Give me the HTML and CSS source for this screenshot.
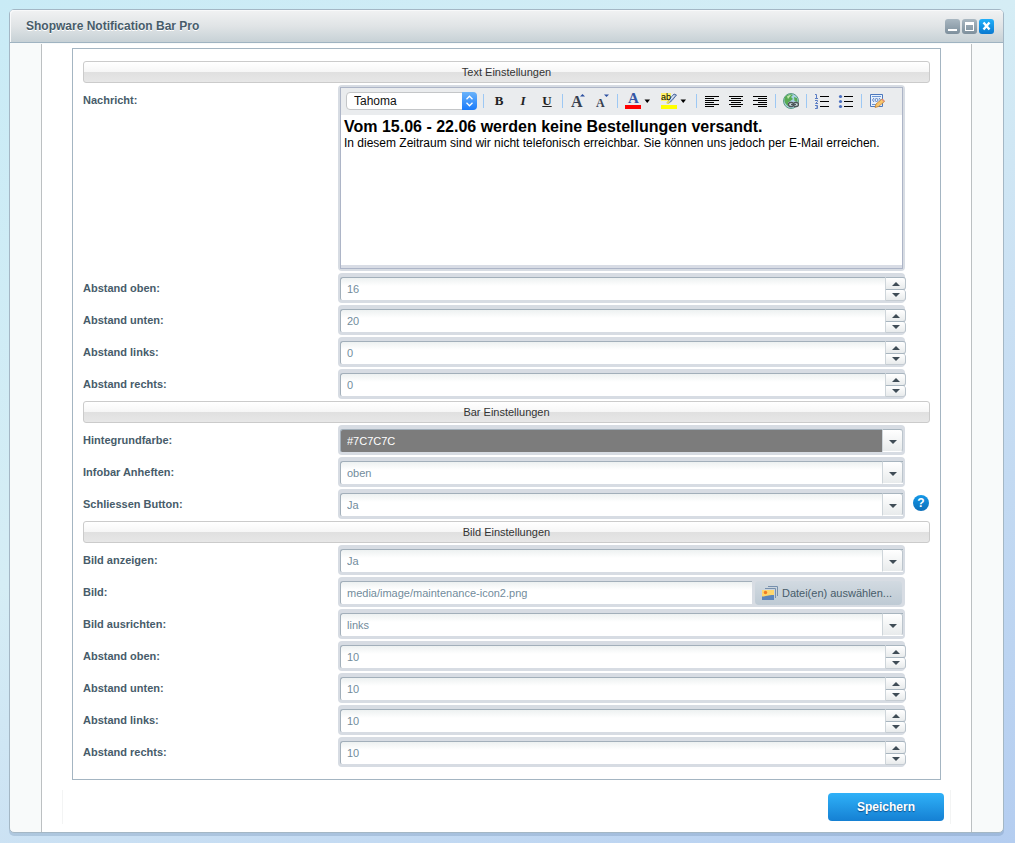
FILE: index.html
```html
<!DOCTYPE html>
<html lang="de">
<head>
<meta charset="utf-8">
<title>Shopware Notification Bar Pro</title>
<link rel="stylesheet" href="styles.css">
</head>
<body>
<main class="window">
  <header class="window-header">
    <h1 class="window-title">Shopware Notification Bar Pro</h1>
    <div class="window-tools">
      <button class="tool" type="button" aria-label="Minimieren"><svg width="15" height="15" viewBox="0 0 15 15"><path d="M3 10h9v2H3z" fill="#fff"/></svg></button>
      <button class="tool" type="button" aria-label="Maximieren"><svg width="15" height="15" viewBox="0 0 15 15"><path d="M3 3h9v9H3zM4 6v5h7V6z" fill="#fff" fill-rule="evenodd"/></svg></button>
      <button class="tool tool-close" type="button" aria-label="Schließen"><svg width="15" height="15" viewBox="0 0 15 15"><path d="M4.500 3.500l6 7M10.500 3.500l-6 7" stroke="#fff" stroke-width="2.400"/></svg></button>
    </div>
  </header>
  <form class="panel">
    <div class="fields">
      <h2 class="section">Text Einstellungen</h2>
      <div class="row">
        <span class="label" id="msg-label">Nachricht:</span>
        <div class="control editor">
          <div class="editor-frame">
            <div class="toolbar">
              <div class="font-select">
                <select aria-label="Schriftart"><option>Tahoma</option></select>
                <span class="font-arrows"><svg width="15" height="18" viewBox="0 0 15 18"><path d="M4.500 7.200l3-3 3 3M4.500 10.800l3 3 3-3" fill="none" stroke="#fff" stroke-width="1.300"/></svg></span>
              </div>
              <span class="sep"></span>
              <button class="tb bold" type="button">B</button>
              <button class="tb italic" type="button">I</button>
              <button class="tb underline" type="button">U</button>
              <span class="sep"></span>
              <button class="tb" type="button" aria-label="Text vergrößern"><svg width="16" height="16" viewBox="0 0 16 16"><text class="glyph" x="1" y="14" font-size="16" fill="#38404e">A</text><path d="M10 3.500h5L12.500 1z" fill="#2b4fa0"/></svg></button>
              <button class="tb" type="button" aria-label="Text verkleinern"><svg width="16" height="16" viewBox="0 0 16 16"><text class="glyph" x="2" y="14" font-size="12" fill="#38404e">A</text><path d="M10 1.500h5L12.500 4z" fill="#2b4fa0"/></svg></button>
              <span class="sep"></span>
              <button class="tb tb-wide" type="button" aria-label="Textfarbe"><svg width="28" height="18" viewBox="0 -2 28 18"><text class="glyph" x="3" y="10" font-size="15" fill="#3557a5">A</text><path d="M0 12h16v4H0z" fill="#f00"/><path d="M19.500 6.500h5.500l-2.750 3.500z" fill="#000"/></svg></button>
              <button class="tb tb-wide" type="button" aria-label="Hintergrundfarbe"><svg width="28" height="18" viewBox="0 -2 28 18"><path d="M0 0h10v8H0z" fill="#fff36b"/><path d="M6.500 10l1.500-3L13 1l2.500 1L11 7.500 8 10z" fill="#a9bede" stroke="#4f6aa0"/><path d="M8.500 7.500L13 2.500" stroke="#fff"/><path d="M5 10l3-3 1 2-2 2z" fill="#e9dc50"/><text class="ab" x="0" y="7" font-size="9">ab</text><path d="M0 12h16v4H0z" fill="#ff0"/><path d="M19.500 6.500h5.500l-2.750 3.500z" fill="#000"/></svg></button>
              <span class="sep"></span>
              <button class="tb" type="button" aria-label="Linksbündig"><svg width="16" height="16" viewBox="0 0 16 16"><path d="M1 3.500h14M1 5.500h9M1 7.500h14M1 9.500h9M1 11.500h14M1 13.500h9" stroke="#000"/></svg></button>
              <button class="tb" type="button" aria-label="Zentriert"><svg width="16" height="16" viewBox="0 0 16 16"><path d="M1 3.500h14M3 5.500h10M1 7.500h14M3 9.500h10M1 11.500h14M3 13.500h10" stroke="#000"/></svg></button>
              <button class="tb" type="button" aria-label="Rechtsbündig"><svg width="16" height="16" viewBox="0 0 16 16"><path d="M1 3.500h14M6 5.500h9M1 7.500h14M6 9.500h9M1 11.500h14M6 13.500h9" stroke="#000"/></svg></button>
              <span class="sep"></span>
              <button class="tb" type="button" aria-label="Link"><svg width="16" height="16" viewBox="0 0 16 16"><circle cx="8" cy="8" r="7.500" fill="#a9d0e4" stroke="#5b9b84"/><path d="M2 4c2-3 6-3.500 8-2L8 4l2 2-4 3-1 4C2 11 .5 8 2 4zM11 4l3 1 .5 4-3-1z" fill="#58ab53"/><path d="M4 3.500c1-1 2.500-1.500 4-1.500L5 6z" fill="#c1e6af"/><path d="M5 9h10v5H5z" fill="#dce3df" opacity=".7"/><rect x="5.500" y="9.500" width="5" height="4" rx="2" fill="none" stroke="#4c5659" stroke-width="1.300"/><rect x="10.500" y="9.500" width="5" height="4" rx="2" fill="none" stroke="#4c5659" stroke-width="1.300"/><path d="M8 11.500h5" stroke="#4c5659"/></svg></button>
              <span class="sep"></span>
              <button class="tb" type="button" aria-label="Nummerierte Liste"><svg width="16" height="16" viewBox="0 0 16 16"><path d="M6 3.500h9M6 8.500h9M6 13.500h9" stroke="#000"/><path d="M1 1.500h1.500V5M1 5.500h3M1 7.500h2.500v1L1.500 10.500H4M1 12.500h2.500v3H1M2 14h1" fill="none" stroke="#5b7cc4"/></svg></button>
              <button class="tb" type="button" aria-label="Aufzählung"><svg width="16" height="16" viewBox="0 0 16 16"><path d="M6 3.500h9M6 8.500h9M6 13.500h9" stroke="#000"/><circle cx="2.500" cy="3.500" r="1.600" fill="#4a6fc0"/><circle cx="2.500" cy="8.500" r="1.600" fill="#4a6fc0"/><circle cx="2.500" cy="13.500" r="1.600" fill="#4a6fc0"/></svg></button>
              <span class="sep"></span>
              <button class="tb" type="button" aria-label="Quelltext"><svg width="16" height="16" viewBox="0 0 16 16"><path d="M1.500 1.500h12v12h-12z" fill="#e8f1fc" stroke="#4c78bd"/><path d="M3 3.500h9M3 11.500h5" stroke="#6a94d4"/><path d="M5 5L3.500 7 5 9M10 5l1.500 2L10 9" fill="none" stroke="#5d84c4"/><circle cx="7.500" cy="7" r="1.500" fill="none" stroke="#5d84c4"/><path d="M6 14.500l1-3.500 6-5 2.500 2.500-6 5z" fill="#f8c66c" stroke="#c48336" stroke-width=".8"/><path d="M12.500 6.500l1-1 2.300 2.300-1 1.200z" fill="#e18b74"/></svg></button>
            </div>
            <div class="message" contenteditable="true" role="textbox" aria-multiline="true" aria-labelledby="msg-label">
              <div class="message-title">Vom 15.06 - 22.06 werden keine Bestellungen versandt.</div>
              <div>In diesem Zeitraum sind wir nicht telefonisch erreichbar. Sie können uns jedoch per E-Mail erreichen.</div>
            </div>
          </div>
        </div>
      </div>
      <div class="row"><label class="label" for="t-top">Abstand oben:</label><div class="control spinner"><input id="t-top" type="number" value="16"><div class="steps"><button class="step up" type="button" aria-label="Mehr"></button><button class="step down" type="button" aria-label="Weniger"></button></div></div></div>
      <div class="row"><label class="label" for="t-bottom">Abstand unten:</label><div class="control spinner"><input id="t-bottom" type="number" value="20"><div class="steps"><button class="step up" type="button" aria-label="Mehr"></button><button class="step down" type="button" aria-label="Weniger"></button></div></div></div>
      <div class="row"><label class="label" for="t-left">Abstand links:</label><div class="control spinner"><input id="t-left" type="number" value="0"><div class="steps"><button class="step up" type="button" aria-label="Mehr"></button><button class="step down" type="button" aria-label="Weniger"></button></div></div></div>
      <div class="row"><label class="label" for="t-right">Abstand rechts:</label><div class="control spinner"><input id="t-right" type="number" value="0"><div class="steps"><button class="step up" type="button" aria-label="Mehr"></button><button class="step down" type="button" aria-label="Weniger"></button></div></div></div>

      <h2 class="section">Bar Einstellungen</h2>
      <div class="row"><label class="label" for="color">Hintegrundfarbe:</label><div class="control combo"><input class="color" id="color" type="text" value="#7C7C7C"><button class="trigger" type="button" aria-label="Farbe wählen"></button></div></div>
      <div class="row"><label class="label" for="dock">Infobar Anheften:</label><div class="control combo"><select id="dock"><option>oben</option></select><span class="trigger overlay"></span></div></div>
      <div class="row"><label class="label" for="close">Schliessen Button:</label><div class="control combo"><select id="close"><option>Ja</option></select><span class="trigger overlay"></span></div><button class="help" type="button">?</button></div>

      <h2 class="section">Bild Einstellungen</h2>
      <div class="row"><label class="label" for="show">Bild anzeigen:</label><div class="control combo"><select id="show"><option>Ja</option></select><span class="trigger overlay"></span></div></div>
      <div class="row"><label class="label" for="image">Bild:</label><div class="control media"><input id="image" type="text" value="media/image/maintenance-icon2.png"><button class="choose" type="button"><svg width="16" height="14" viewBox="0 0 16 14"><path d="M6 .5h9.500V10M3 2.500h10.500V12" fill="none" stroke="#7790ad"/><path d="M0 4h12v10H0z" fill="#ffd66b"/><path d="M0 10.500c3 .5 5-1.500 12-1.500v5H0z" fill="#5d85bb"/><circle cx="3.500" cy="6.500" r="1.700" fill="#f07c23"/></svg>Datei(en) auswählen...</button></div></div>
      <div class="row"><label class="label" for="align">Bild ausrichten:</label><div class="control combo"><select id="align"><option>links</option></select><span class="trigger overlay"></span></div></div>
      <div class="row"><label class="label" for="i-top">Abstand oben:</label><div class="control spinner"><input id="i-top" type="number" value="10"><div class="steps"><button class="step up" type="button" aria-label="Mehr"></button><button class="step down" type="button" aria-label="Weniger"></button></div></div></div>
      <div class="row"><label class="label" for="i-bottom">Abstand unten:</label><div class="control spinner"><input id="i-bottom" type="number" value="10"><div class="steps"><button class="step up" type="button" aria-label="Mehr"></button><button class="step down" type="button" aria-label="Weniger"></button></div></div></div>
      <div class="row"><label class="label" for="i-left">Abstand links:</label><div class="control spinner"><input id="i-left" type="number" value="10"><div class="steps"><button class="step up" type="button" aria-label="Mehr"></button><button class="step down" type="button" aria-label="Weniger"></button></div></div></div>
      <div class="row"><label class="label" for="i-right">Abstand rechts:</label><div class="control spinner"><input id="i-right" type="number" value="10"><div class="steps"><button class="step up" type="button" aria-label="Mehr"></button><button class="step down" type="button" aria-label="Weniger"></button></div></div></div>
    </div>
    <footer class="actions"><button class="save" type="submit">Speichern</button></footer>
  </form>
</main>
</body>
</html>
```
FILE: styles.css
```css
* { box-sizing: border-box; }
body {
  margin: 0;
  padding: 9px 11px 10px 9px;
  min-height: 100vh;
  font: 11px/14px "Liberation Sans", Arial, sans-serif;
  color: #475c6a;
  background: linear-gradient(150deg, #c9ebf6 0%, #d5edf5 41%, #cae0f3 62%, #b4cdf0 100%);
}
button, input, select { font: inherit; color: inherit; margin: 0; border: 0; padding: 0; border-radius: 0; outline: 0; }
svg { display: block; flex: none; }

.window {
  border: 1px solid #a4b7c5;
  border-radius: 5px;
  background: #f8fafa;
  box-shadow: 0 3px 0 rgba(110, 140, 175, .3);
}
.window-header {
  display: flex;
  align-items: center;
  justify-content: space-between;
  height: 33px;
  padding: 0 9px 0 16px;
  border-bottom: 1px solid #9fb3c1;
  border-radius: 4px 4px 0 0;
  box-shadow: inset 1px 1px 0 #f8f9fa;
  background: linear-gradient(#f1f2f3, #e0e4e6 50%, #c7d1d6);
}
.window-title { margin: 0; font-size: 12px; line-height: 16px; text-shadow: 0 1px 0 #fff; }
.window-tools { display: flex; gap: 2px; }
.tool { width: 15px; height: 15px; border-radius: 3px; background: linear-gradient(#a9b7c1, #7e909d); }
.tool-close { background: linear-gradient(#22b0fa, #0a79d0); }

.panel {
  margin: 1px 31px 0;
  padding: 4px 20px 8px;
  border: solid #bcc0c2;
  border-width: 0 1px;
  background: #fff;
}
.fields {
  display: flex;
  flex-direction: column;
  gap: 2px;
  margin: 0 10px;
  padding: 12px 10px;
  border: 1px solid #a4b5c2;
}
.section {
  margin: 0;
  height: 22px;
  border: 1px solid #cbcbcb;
  border-radius: 3px;
  background: linear-gradient(#fff, #f6f6f6 50%, #e0e0e0 50%, #e7e7e7);
  color: #333;
  font-size: 11px;
  font-weight: normal;
  line-height: 21px;
  text-align: center;
}
.row { display: flex; }
.label { flex: none; width: 255px; font-weight: bold; line-height: 30px; }
.control {
  flex: 1;
  display: flex;
  position: relative;
  min-width: 0;
  height: 30px;
  margin-right: 25px;
  padding: 4px 2px 3px;
  border-radius: 4px;
  background: #d7dce3;
}
.control > input, .control > select {
  flex: 1;
  min-width: 0;
  height: 23px;
  padding: 0 6px;
  border: solid #a2afba;
  border-width: 1px 0 0 1px;
  border-radius: 3px 0 0 2px;
  background: linear-gradient(#edf1f1, #fff 8px);
  color: #728c9c;
  appearance: none;
}
.spinner { padding-right: 0; }
input[type=number]::-webkit-inner-spin-button { appearance: none; }
input[type=number] { appearance: textfield; }
.steps { display: flex; flex-direction: column; width: 21px; height: 24px; margin-right: -1px; }
.step, .trigger {
  display: grid;
  place-items: center;
  border: 1px solid #a8b5bf;
  border-left-color: #ced5da;
  background: linear-gradient(#fff, #e8ebec);
}
.step { height: 13px; border-right-color: #b9c3cb; border-radius: 0 3px 3px 0; }
.step.up { padding-top: 1px; }
.step.down { height: 11px; border-top: 0; border-bottom-color: #c5ccd3; }
.step::after, .trigger::after { content: ""; border: 4px solid transparent; }
.step.up::after { border-top: 0; border-bottom-color: #3f4c56; }
.step.down::after, .trigger::after { border-bottom: 0; border-top-color: #3f4c56; }
.trigger { width: 21px; height: 23px; padding-top: 2px; border-right-color: #bcc5cd; border-bottom-color: #fff; border-radius: 0 3px 3px 0; }
.overlay { position: absolute; right: 2px; top: 4px; pointer-events: none; }
.control > .color { background: #7c7c7c; color: #fff; }
.media { padding-right: 3px; }
.choose {
  display: flex;
  align-items: center;
  gap: 4px;
  height: 24px;
  margin-left: 3px;
  padding: 0 10px 0 7px;
  border-radius: 4px;
  background: linear-gradient(#d2dae1, #becad4);
  white-space: nowrap;
}
.help {
  width: 16px;
  height: 16px;
  margin: 6px 1px 0 -17px;
  border-radius: 50%;
  background: linear-gradient(#1498e8, #0d6fb9);
  color: #fff;
  font-weight: bold;
  font-size: 12px;
  line-height: 16px;
}

.editor { height: 186px; padding: 2px; }
.editor-frame {
  flex: 1;
  display: flex;
  flex-direction: column;
  min-width: 0;
  border: 1px solid #adb5c7;
  background: #d8dce5;
  padding-bottom: 3px;
}
.toolbar { display: flex; align-items: center; height: 27px; padding: 0 0 2px 5px; background: #eaecee; }
.font-select { position: relative; width: 131px; height: 18px; }
.font-select select {
  width: 100%;
  height: 18px;
  padding: 0 7px;
  border: 1px solid #c4c6c8;
  border-radius: 4px;
  background: #fff;
  color: #111;
  font-size: 12px;
  appearance: none;
}
.font-arrows { position: absolute; right: 0; top: 0; border-radius: 0 4px 4px 0; background: linear-gradient(#6bb3fa, #1a7bfb); }
.sep { flex: none; width: 1px; height: 14px; margin: 0 3px; background: #9dc8f4; }
.font-select + .sep { margin-left: 6px; }
.tb {
  flex: none;
  display: grid;
  place-items: center;
  width: 24px;
  height: 22px;
  background: none;
  color: #222;
  font-family: "Liberation Serif", serif;
  font-size: 13px;
  font-weight: bold;
}
.tb-wide { width: 36px; padding-bottom: 2px; }
.italic { font-style: italic; }
.underline { text-decoration: underline; }
.glyph { font-family: "Liberation Serif", serif; font-weight: bold; }
.ab { font-family: "Liberation Sans", sans-serif; font-weight: normal; }
.message {
  flex: 1;
  padding: 3px;
  background: #fff;
  color: #000;
  font-size: 12px;
}
.message-title { font-size: 16px; font-weight: bold; line-height: 18px; }

.actions {
  display: flex;
  justify-content: flex-end;
  margin-top: 10px;
  padding: 3px 6px 3px 0;
  border: solid #f3f4f4;
  border-width: 0 1px;
}
.save {
  width: 116px;
  height: 28px;
  border-radius: 4px;
  background: linear-gradient(#2fb1f8, #1580d3);
  color: #fff;
  font-size: 12px;
  font-weight: bold;
  text-shadow: 0 1px 1px #0c4f8d;
}
```
